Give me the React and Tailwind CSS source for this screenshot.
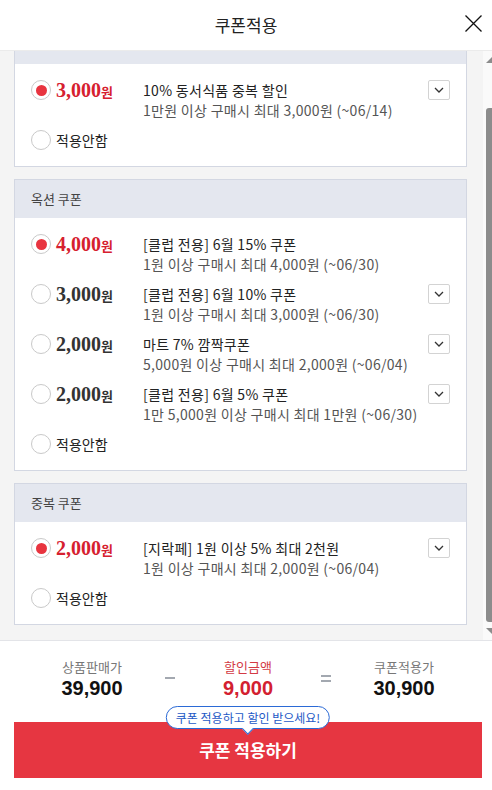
import React from 'react';

const sections = [
  {
    name: null,
    coupons: [
      { price: '3,000', title: '10% 동서식품 중복 할인', desc: '1만원 이상 구매시 최대 3,000원 (~06/14)', checked: true, more: true },
    ],
  },
  {
    name: '옥션 쿠폰',
    coupons: [
      { price: '4,000', title: '[클럽 전용] 6월 15% 쿠폰', desc: '1원 이상 구매시 최대 4,000원 (~06/30)', checked: true, more: false },
      { price: '3,000', title: '[클럽 전용] 6월 10% 쿠폰', desc: '1원 이상 구매시 최대 3,000원 (~06/30)', checked: false, more: true },
      { price: '2,000', title: '마트 7% 깜짝쿠폰', desc: '5,000원 이상 구매시 최대 2,000원 (~06/04)', checked: false, more: true },
      { price: '2,000', title: '[클럽 전용] 6월 5% 쿠폰', desc: '1만 5,000원 이상 구매시 최대 1만원 (~06/30)', checked: false, more: true },
    ],
  },
  {
    name: '중복 쿠폰',
    coupons: [
      { price: '2,000', title: '[지락페] 1원 이상 5% 최대 2천원', desc: '1원 이상 구매시 최대 2,000원 (~06/04)', checked: true, more: true },
    ],
  },
];

function Radio({ checked }) {
  return (
    <span className="w-[20px] h-[20px] shrink-0 rounded-full border border-[#c9c9c9] bg-white flex items-center justify-center">
      {checked && <span className="w-[11px] h-[11px] rounded-full bg-[#e8343f]" />}
    </span>
  );
}

function MoreButton() {
  return (
    <button className="w-[22px] h-[20px] shrink-0 border border-[#d3d3d3] rounded-[2px] bg-white flex items-center justify-center">
      <svg width="10" height="6" viewBox="0 0 10 6" fill="none">
        <path d="M1 1l4 4 4-4" stroke="#333" strokeWidth="1.3" />
      </svg>
    </button>
  );
}

function CouponRow({ coupon }) {
  return (
    <div className="flex items-start h-[40px]">
      <Radio checked={coupon.checked} />
      <div
        className={`ml-[5px] w-[87px] shrink-0 h-[20px] flex items-baseline font-bold ${
          coupon.checked ? 'text-[#d6202f]' : 'text-[#333]'
        }`}
      >
        <span className="font-['Liberation_Serif',serif] text-[20px] leading-[20px]">{coupon.price}</span>
        <span className="text-[13px] leading-[20px]">원</span>
      </div>
      <div className="flex-1 min-w-0 tracking-[0.3px]">
        <p className="text-[14px] leading-[20px] text-[#222] whitespace-nowrap">{coupon.title}</p>
        <p className="text-[14px] leading-[20px] text-[#555] whitespace-nowrap">{coupon.desc}</p>
      </div>
      {coupon.more && <MoreButton />}
    </div>
  );
}

function Section({ section }) {
  return (
    <div className={`border-x border-b border-[#d3d7e2] bg-white ${section.name ? 'border-t' : ''}`}>
      {section.name ? (
        <div className="h-[38px] bg-[#e4e7ef] px-[16px] flex items-center text-[13px] text-[#444]">
          {section.name}
        </div>
      ) : (
        <div className="h-[13px] bg-[#e4e7ef]" />
      )}
      <div className="px-[16px] pt-[16px] pb-[16px] flex flex-col gap-[10px]">
        {section.coupons.map((c, i) => (
          <CouponRow key={i} coupon={c} />
        ))}
        <div className="flex items-center h-[20px]">
          <Radio checked={false} />
          <span className="ml-[5px] text-[14px] leading-[20px] text-[#222]">적용안함</span>
        </div>
      </div>
    </div>
  );
}

function ScrollBar() {
  return (
    <div className="w-[9px] shrink-0 bg-[#fafafa] flex flex-col items-end pt-[6px] pb-[6px]">
      <svg width="6" height="6" viewBox="0 0 6 6">
        <path d="M6 0v6H0z" fill="#8c8c8c" />
      </svg>
      <div className="mt-[45px] w-[6px] h-[514px] bg-[#8c8c8c] rounded-l-[3px]" />
      <div className="flex-1" />
      <svg width="6" height="6" viewBox="0 0 6 6">
        <path d="M0 0h6v6z" fill="#8c8c8c" />
      </svg>
    </div>
  );
}

export default function App() {
  return (
    <div className="w-[492px] h-[790px] flex flex-col bg-white overflow-hidden font-['Noto_Sans_CJK_KR','Noto_Sans',sans-serif]">
      {/* Header */}
      <div className="h-[51px] shrink-0 relative flex items-center justify-center border-b border-[#ebebeb]">
        <h1 className="text-[17px] text-[#222]">쿠폰적용</h1>
        <button className="absolute right-[10px] top-[15px] w-[17px] h-[17px]">
          <svg width="17" height="17" viewBox="0 0 17 17">
            <path d="M0.5 0.5l16 16M16.5 0.5l-16 16" stroke="#111" strokeWidth="1.3" />
          </svg>
        </button>
      </div>

      {/* Coupon list */}
      <div className="h-[590px] shrink-0 flex bg-[#f4f4f4] overflow-hidden border-b border-[#e3e4e8]">
        <div className="flex-1 pl-[14px] pr-[16px] flex flex-col gap-[12px]">
          {sections.map((s, i) => (
            <Section key={i} section={s} />
          ))}
        </div>
        <ScrollBar />
      </div>

      {/* Summary */}
      <div className="ml-[14px] w-[468px] pt-[17px] flex items-start">
        <div className="flex-1 flex flex-col items-center">
          <span className="text-[13px] leading-[18px] text-[#777]">상품판매가</span>
          <span className="font-['Liberation_Sans',sans-serif] font-bold text-[20px] leading-[24px] text-[#111]">39,900</span>
        </div>
        <div className="w-0 flex justify-center pt-[19px]">
          <span className="block w-[10px] h-[2px] bg-[#a3a8b0] shrink-0" />
        </div>
        <div className="flex-1 flex flex-col items-center">
          <span className="text-[13px] leading-[18px] text-[#d33a44]">할인금액</span>
          <span className="font-['Liberation_Sans',sans-serif] font-bold text-[20px] leading-[24px] text-[#d32030]">9,000</span>
        </div>
        <div className="w-0 flex justify-center pt-[17px]">
          <span className="flex flex-col gap-[3px] shrink-0">
            <span className="block w-[10px] h-[2px] bg-[#a3a8b0]" />
            <span className="block w-[10px] h-[2px] bg-[#a3a8b0]" />
          </span>
        </div>
        <div className="flex-1 flex flex-col items-center">
          <span className="text-[13px] leading-[18px] text-[#777]">쿠폰적용가</span>
          <span className="font-['Liberation_Sans',sans-serif] font-bold text-[20px] leading-[24px] text-[#111]">30,900</span>
        </div>
      </div>

      {/* Apply button */}
      <div className="relative ml-[14px] w-[468px] mt-[22px]">
        <button className="w-full h-[56px] bg-[#e63641] text-white text-[17px] font-bold flex items-center justify-center">
          쿠폰 적용하기
        </button>
        <div className="absolute left-1/2 -translate-x-1/2 top-[-16px]">
          <div className="relative h-[23px] px-[9px] rounded-full border border-[#2b6ad6] bg-white flex items-center text-[12px] text-[#1d59c6] whitespace-nowrap">
            쿠폰 적용하고 할인 받으세요!
            <span className="absolute left-1/2 -translate-x-1/2 bottom-[-5px] w-[8px] h-[8px] rotate-45 bg-white border-r border-b border-[#2b6ad6]" />
          </div>
        </div>
      </div>
    </div>
  );
}
